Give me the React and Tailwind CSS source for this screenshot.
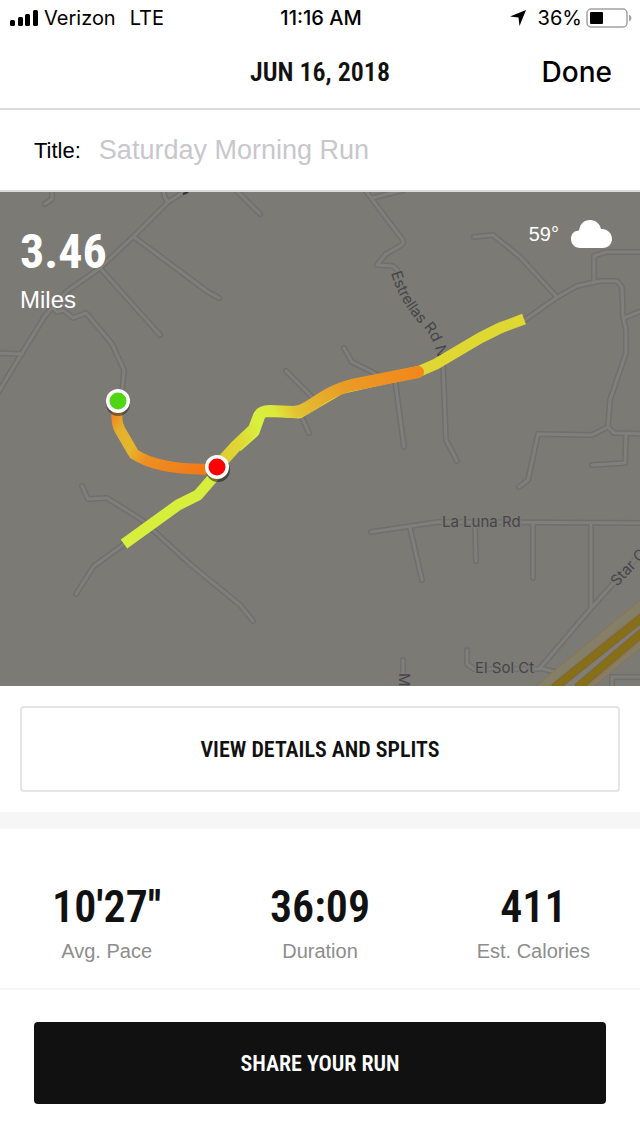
import { useState } from 'react'

const stats = [
  { value: "10'27''", label: 'Avg. Pace' },
  { value: '36:09', label: 'Duration' },
  { value: '411', label: 'Est. Calories' },
]

const roads = [
  'M187 190L168 202L134 236L100 268L66 292L45 316L22 353L-4 396',
  'M163 190L165 198L168 202',
  'M134 237L208 292L219 298',
  'M100 268L160 335',
  'M53 308L57 312L63 310L73 318L86 313L112 344L124 370L122 392',
  'M-4 353L22 354',
  'M52 188V199L45 204',
  'M236 190L260 214',
  'M286 371L313 398',
  'M302 418L309 433',
  'M365 190L402 239Q405 243 400 246L386 254L377 265L393 266L397 270',
  'M372 198L404 190',
  'M474 237L493 235L520 257L556 296',
  'M522 322L556 298L577 286L600 281H617L622 287L623 317L626 330V353L610 400L608 427L592 435L538 434L528 480L519 487',
  'M608 427L614 433L644 434',
  'M626 434L625 463L592 465',
  'M594 280V256L606 252H644',
  'M624 318L644 310',
  'M344 348L352 362L378 375',
  'M395 380L404 447',
  'M443 366L446 440L457 461',
  'M82 486L88 499L107 498L142 520L190 564L240 605L253 621',
  'M127 542L94 566L76 594',
  'M371 532L438 522L644 523',
  'M410 528L422 580',
  'M475 524L476 561',
  'M533 523V578',
  'M591 523V607',
  'M555 672L540 668L593 606L660 532',
  'M467 650V664L474 669L540 669',
  'M403 660V690',
]

const StatusBar = () => (
  <div className="grid grid-cols-3 items-center h-9 pl-2.5 pr-2 font-['Inter',sans-serif] text-xl text-black">
    <div className="flex items-center gap-1.5">
      <svg className="w-7 h-4 shrink-0" viewBox="0 0 28 16">
        <rect x="0" y="10" width="5" height="6" rx="1.5" />
        <rect x="8" y="7" width="5" height="9" rx="1.5" />
        <rect x="15" y="4" width="5" height="12" rx="1.5" />
        <rect x="23" y="0" width="5" height="16" rx="1.5" />
      </svg>
      <span>Verizon</span>
      <span className="pl-2">LTE</span>
    </div>
    <div className="text-center font-medium">11:16 AM</div>
    <div className="flex items-center justify-end gap-1">
      <svg className="w-4 h-4 mr-2 shrink-0" viewBox="0 0 16 16">
        <path d="M16 0L9.500 16L8.500 7.500L0 6.500Z" />
      </svg>
      <span>36%</span>
      <svg className="w-[46px] h-5 shrink-0" viewBox="0 0 46 20">
        <rect x="1" y="1" width="40" height="18" rx="4" fill="#fff" stroke="#a3a3a3" strokeWidth="1.500" />
        <rect x="4" y="4" width="13" height="12" rx="1" />
        <path d="M43 6.500Q45.500 7.500 45.500 10T43 13.500Z" fill="#a3a3a3" />
      </svg>
    </div>
  </div>
)

const RouteMap = () => (
  <svg className="block w-full h-auto" viewBox="0 192 640 494" role="img" aria-label="Route map">
    <defs>
      <linearGradient id="start" gradientUnits="userSpaceOnUse" x1="117" y1="412" x2="200" y2="470">
        <stop offset="0" stopColor="#ef8a22" />
        <stop offset="0.120" stopColor="#e3b02d" />
        <stop offset="0.320" stopColor="#e6b62c" />
        <stop offset="0.500" stopColor="#ee8f22" />
        <stop offset="1" stopColor="#f27a17" />
      </linearGradient>
      <linearGradient id="middle" gradientUnits="userSpaceOnUse" x1="217" y1="467" x2="425" y2="372">
        <stop offset="0" stopColor="#e0c832" />
        <stop offset="0.140" stopColor="#dfd836" />
        <stop offset="0.250" stopColor="#d8f23e" />
        <stop offset="0.330" stopColor="#dce93a" />
        <stop offset="0.420" stopColor="#e2c033" />
        <stop offset="0.650" stopColor="#ea9b26" />
        <stop offset="1" stopColor="#f2861b" />
      </linearGradient>
      <path id="estrellas" d="M391 273Q400 304 423 327Q437 340 440 376" />
    </defs>

    <rect x="0" y="192" width="640" height="494" fill="#7b7a74" />

    <g fill="none" strokeLinecap="round" strokeLinejoin="round">
      <g stroke="#706f6c" strokeWidth="6">
        {roads.map((d) => <path key={d} d={d} />)}
      </g>
      <g stroke="#7f7f7c" strokeWidth="3">
        {roads.map((d) => <path key={d} d={d} />)}
      </g>
    </g>

    {/* Highway */}
    <path d="M640 601L536 686H594L640 648Z" fill="#838067" />
    <path d="M640 612L547 686H586L640 641Z" fill="#7f7e79" />
    <g fill="none" stroke="#94714f" strokeWidth="1">
      <path d="M644 597L536 686M644 609L547 688M644 638L586 688M644 645L594 686" />
    </g>
    <g fill="none">
      <path d="M644 616L554 688M644 631L577 688" stroke="#86653a" strokeWidth="9" />
      <path d="M644 616L554 688M644 631L577 688" stroke="#857017" strokeWidth="7" />
    </g>
    <path d="M644 677H612V690" fill="none" stroke="#706f6c" strokeWidth="6" />
    <path d="M644 677H612V690" fill="none" stroke="#7f7f7c" strokeWidth="3" />

    <g
      className="font-['Inter',sans-serif] text-[15px]"
      fill="#45454a"
      stroke="#7b7a74"
      strokeWidth="3"
      paintOrder="stroke"
    >
      <text x="442" y="527">La Luna Rd</text>
      <text x="475" y="673">El Sol Ct</text>
      <text transform="translate(617 587) rotate(-47)">Star C</text>
      <text transform="translate(399 673) rotate(90)">M</text>
      <text><textPath href="#estrellas">Estrellas Rd N</textPath></text>
    </g>
    <path d="M183 194L188 192" stroke="#333" strokeWidth="2" />

    {/* Run */}
    <g fill="none" strokeWidth="11" strokeLinejoin="round">
      <path d="M124 544L178 505L198 495L217 473" stroke="#d8ee3c" />
      <path d="M237 447L254 432L260 415" stroke="#d8f23e" />
      <path d="M285 412L299 413L340 389L375 381L420 371L436 364L480 338L500 328L524 319" stroke="#dfd832" />
      <path d="M118 402Q115 422 120 430L134 454Q160 471 216 469" stroke="url(#start)" />
      <path
        d="M217 467L236 446L254 429L259 416Q261 411 270 411L294 412Q302 411 308 407L322 398Q336 389 352 385L418 372"
        stroke="url(#middle)"
        strokeWidth="12"
        strokeLinecap="round"
      />
    </g>
    <circle cx="118" cy="404" r="12" fill="#333" opacity="0.6" />
    <circle cx="118" cy="401" r="12" fill="#fff" />
    <circle cx="118" cy="401" r="8.500" fill="#4fd513" />
    <circle cx="218" cy="470" r="12" fill="#222" opacity="0.6" />
    <circle cx="217" cy="467" r="12" fill="#fff" />
    <circle cx="217" cy="467" r="8.500" fill="#fe0000" />
  </svg>
)

const App = () => {
  const [title, setTitle] = useState('')

  return (
    <div className="min-h-screen bg-white font-['Liberation_Sans',Arial,sans-serif] text-[#111111]">
      <StatusBar />

      <header className="grid grid-cols-3 items-center h-[74px] px-7 border-b-2 border-[#dcdcdc]">
        <h1 className="col-start-2 text-center whitespace-nowrap font-['Roboto_Condensed','Liberation_Sans_Narrow',sans-serif] text-[26px] font-semibold">
          JUN 16, 2018
        </h1>
        <button type="button" className="justify-self-end font-['Inter',sans-serif] text-[28px] font-medium text-black">
          Done
        </button>
      </header>

      <div className="flex items-center h-[82px] px-[34px] gap-[18px] border-b-2 border-[#dcdcdc]">
        <label htmlFor="title" className="text-[22px] text-black">Title:</label>
        <input
          id="title"
          type="text"
          value={title}
          onChange={(e) => setTitle(e.target.value)}
          placeholder="Saturday Morning Run"
          className="flex-1 min-w-0 text-[27px] placeholder:text-[#c7c7cc] focus:outline-none"
        />
      </div>

      <section className="relative">
        <RouteMap />
        <div className="absolute inset-x-0 top-0 flex justify-between items-start pl-5 pr-7 pt-7 text-white">
          <div>
            <div className="font-['Roboto_Condensed','Liberation_Sans_Narrow',sans-serif] text-5xl leading-[64px] font-bold">
              3.46
            </div>
            <div className="text-2xl">Miles</div>
          </div>
          <div className="flex items-center gap-3">
            <span className="text-xl">59°</span>
            <svg className="w-[41px] h-7" viewBox="0 0 41 28" fill="currentColor">
              <path d="M9 28C4 28 0 24 0 19C0 14 3 10.500 8 10.500C9 4 13 0 19 0C25 0 29 4 30 9C36 8.500 41 13 41 19C41 24 37 28 32 28Z" />
            </svg>
          </div>
        </div>
      </section>

      <div className="px-5 py-5">
        <button
          type="button"
          className="w-full h-[86px] border-2 border-[#e5e5e5] rounded font-['Roboto_Condensed','Liberation_Sans_Narrow',sans-serif] text-[22px] font-semibold"
        >
          VIEW DETAILS AND SPLITS
        </button>
      </div>

      <div className="h-[17px] bg-[#f6f6f6]" />

      <section className="grid grid-cols-3 pt-12 pb-[23px] border-b-2 border-[#f6f6f6] text-center">
        {stats.map((stat) => (
          <div key={stat.label}>
            <div className="font-['Roboto_Condensed','Liberation_Sans_Narrow',sans-serif] text-[44px] leading-[60px] font-semibold">
              {stat.value}
            </div>
            <div className="text-xl text-[#8d8d8d]">{stat.label}</div>
          </div>
        ))}
      </section>

      <div className="px-[34px] py-8">
        <button
          type="button"
          className="w-full h-[82px] bg-[#111111] rounded-sm font-['Roboto_Condensed','Liberation_Sans_Narrow',sans-serif] text-[22px] font-semibold text-white"
        >
          SHARE YOUR RUN
        </button>
      </div>
    </div>
  )
}

export default App
